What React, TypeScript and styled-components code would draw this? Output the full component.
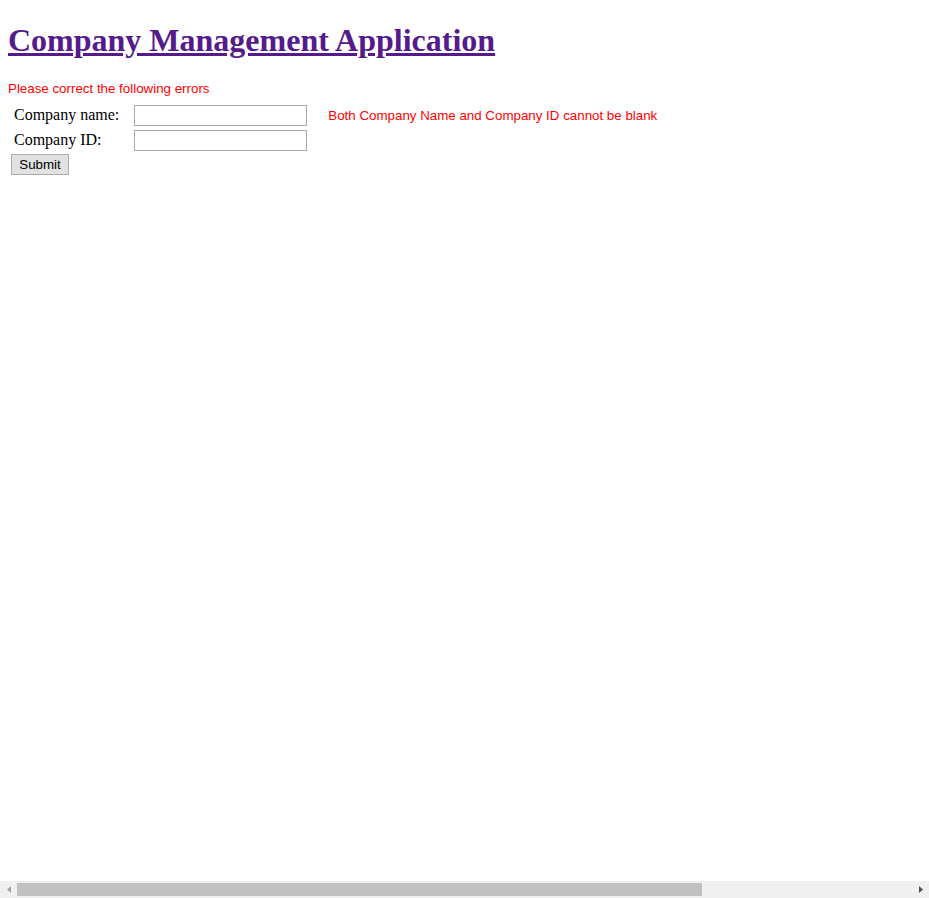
import React from "react";
import styled, { createGlobalStyle } from "styled-components";

const Global = createGlobalStyle`
  html, body { background: #fff; }
  body {
    margin: 8px;
    font-family: "Liberation Serif", "Times New Roman", serif;
    font-size: 16px;
    color: #000;
  }
`;

const Page = styled.div``;

const Title = styled.h1`
  font-family: "Liberation Serif", "Times New Roman", serif;
  font-size: 32px;
  font-weight: bold;
  margin: 14.44px 0 21.44px;
`;

const TitleLink = styled.a`
  color: #551a8b;
  text-decoration: underline;
  cursor: pointer;
`;

const ErrorText = styled.div`
  font-family: "Liberation Sans", Arial, sans-serif;
  font-size: 13.33px;
  color: #ff0000;
`;

const FormTable = styled.table`
  border-spacing: 2px;
  margin-top: 6px;
`;

const Label = styled.td`
  padding: 1px 12px 1px 4px;
  font-family: "Liberation Serif", "Times New Roman", serif;
  font-size: 16px;
  white-space: nowrap;
`;

const Cell = styled.td`
  padding: 1px;
  vertical-align: middle;
`;

const ButtonCell = styled.td`
  padding: 0 1px 1px 1px;
`;

const MessageCell = styled.td`
  padding: 1px 1px 1px 18px;
  font-family: "Liberation Sans", Arial, sans-serif;
  font-size: 13.33px;
  color: #ff0000;
  white-space: nowrap;
`;

const TextInput = styled.input`
  box-sizing: border-box;
  width: 173px;
  height: 21px;
  border: 1px solid #a9a9a9;
  padding: 1px 2px;
  margin: 0;
  font-family: "Liberation Sans", Arial, sans-serif;
  font-size: 13.33px;
  background: #fff;
`;

const SubmitButton = styled.button`
  box-sizing: border-box;
  width: 58px;
  height: 21px;
  margin: 0;
  padding: 0 6px;
  font-family: "Liberation Sans", Arial, sans-serif;
  font-size: 13.33px;
  color: #000;
  background: #e1e1e1;
  border: 1px solid #adadad;
  border-radius: 0;
`;

const ScrollBar = styled.div`
  position: fixed;
  left: 0;
  right: 0;
  bottom: 0;
  height: 17px;
  background: #f0f0f0;
  display: flex;
  align-items: center;
`;

const ArrowButton = styled.div`
  width: 17px;
  height: 17px;
  display: flex;
  align-items: center;
  justify-content: center;
  flex: none;
`;

const Track = styled.div`
  flex: 1;
  height: 13px;
  display: flex;
`;

const Thumb = styled.div`
  height: 100%;
  background: #c1c1c1;
`;

export default function App() {
  return (
    <Page>
      <Global />
      <Title>
        <TitleLink href="#">Company Management Application</TitleLink>
      </Title>
      <ErrorText>Please correct the following errors</ErrorText>
      <FormTable>
        <tbody>
          <tr>
            <Label>Company name:</Label>
            <Cell>
              <TextInput type="text" />
            </Cell>
            <MessageCell>Both Company Name and Company ID cannot be blank</MessageCell>
          </tr>
          <tr>
            <Label>Company ID:</Label>
            <Cell>
              <TextInput type="text" />
            </Cell>
            <Cell />
          </tr>
          <tr>
            <ButtonCell colSpan={3}>
              <SubmitButton type="button">Submit</SubmitButton>
            </ButtonCell>
          </tr>
        </tbody>
      </FormTable>
      <ScrollBar>
        <ArrowButton>
          <svg width="4" height="7" viewBox="0 0 4 7">
            <path d="M4 0 L0 3.5 L4 7 Z" fill="#a3a3a3" />
          </svg>
        </ArrowButton>
        <Track>
          <Thumb style={{ width: `${(685 / 895) * 100}%` }} />
        </Track>
        <ArrowButton>
          <svg width="4" height="7" viewBox="0 0 4 7">
            <path d="M0 0 L4 3.5 L0 7 Z" fill="#505050" />
          </svg>
        </ArrowButton>
      </ScrollBar>
    </Page>
  );
}
